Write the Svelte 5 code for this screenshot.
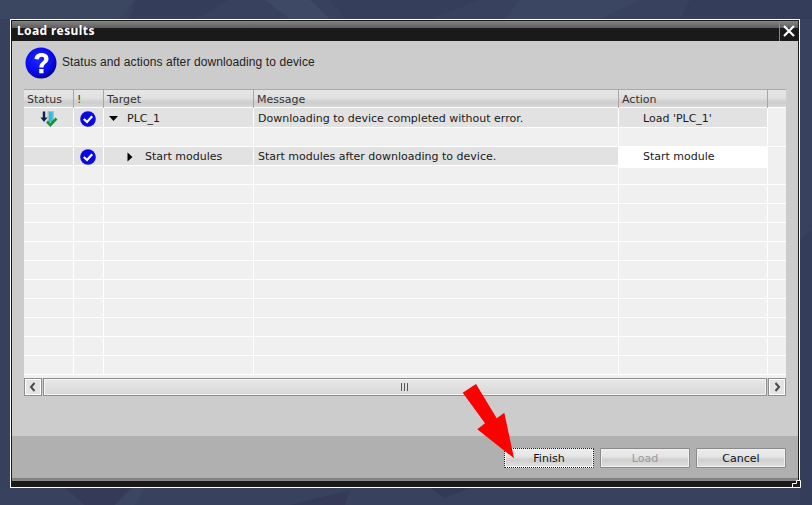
<script>
  const rows = [
    { status: true, check: true, level: 0, open: true, target: 'PLC_1', message: 'Downloading to device completed without error.', action: "Load 'PLC_1'", shaded: true },
    {},
    { check: true, level: 1, target: 'Start modules', message: 'Start modules after downloading to device.', action: 'Start module', shaded: true, white: true },
    {}, {}, {}, {}, {}, {}, {}, {}, {}, {}, {}
  ];
</script>

<div class="page">
  <svg class="wall" width="812" height="505" aria-hidden="true">
    <polygon points="0,0 135,0 120,19 0,19" fill="#3b4661" />
    <polygon points="135,0 228,0 205,15 190,19 130,19" fill="#343e5a" />
    <polygon points="265,0 310,0 330,19 290,19" fill="#3e4966" />
    <polygon points="330,0 480,0 430,19 345,19" fill="#353f5b" />
    <polygon points="520,0 640,0 600,19 505,19" fill="#3b4662" />
    <polygon points="690,0 812,0 812,19 680,19" fill="#343d5a" />
    <polygon points="0,19 10,19 10,488 0,488" fill="#37415d" />
    <polygon points="65,488 130,488 115,505 85,505" fill="#343a58" />
    <polygon points="115,505 133,488 145,488 135,505" fill="#3b4662" />
    <polygon points="390,488 470,488 445,498 430,488" fill="#333a58" />
    <polygon points="290,505 350,490 345,505" fill="#343a58" />
    <polygon points="800,240 812,230 812,505 800,505" fill="#343d5a" />
  </svg>

  <section class="dialog">
    <header class="title">
      <span>Load results</span>
      <button class="close" aria-label="Close">
        <svg width="14" height="14" viewBox="0 0 14 14"><path d="M2 2 12 12M12 2 2 12" stroke="#fff" stroke-width="2.2" /></svg>
      </button>
    </header>

    <div class="body">
      <div class="prompt">
        <svg class="help" width="32" height="32" viewBox="0 0 32 32">
          <defs>
            <radialGradient id="hb" cx=".42" cy=".38" r=".65">
              <stop offset="0" stop-color="#1c28ff" /><stop offset=".72" stop-color="#0808ea" /><stop offset="1" stop-color="#04047a" />
            </radialGradient>
          </defs>
          <circle cx="16" cy="16" r="15.500" fill="url(#hb)" />
          <path d="M9.500 12C9.700 8.300 12.500 6 16.500 6c4.200 0 7 2.200 7 5.700 0 4.700-5 4.600-5 8.800h-4.200c0-5.600 4.900-5.700 4.900-8.600 0-1.300-1-2.200-2.500-2.200-1.700 0-2.700 1-2.900 2.700z" fill="#fff" />
          <rect x="14.200" y="22" width="4.300" height="4.300" fill="#fff" />
        </svg>
        <span>Status and actions after downloading to device</span>
      </div>

      <div class="table">
        <div class="row head">
          <div>Status</div><div class="bang">!</div><div>Target</div><div>Message</div><div>Action</div><div></div>
        </div>
        {#each rows as r}
          <div class="row" class:shaded={r.shaded}>
            <div class="c-status">
              {#if r.status}
                <svg width="18" height="18" viewBox="0 0 18 18">
                  <path d="M2.800 1.500h2.400V7.500H7.500L4 12 .5 7.500H2.800z" fill="#0b2150" />
                  <rect x="7.500" y="1" width="6.500" height="11" fill="#a6bccb" />
                  <rect x="9" y="2" width="3.500" height="10" fill="#1fc4de" />
                  <path d="M7 11.500 10.300 15 16.500 8.500" fill="none" stroke="#17913a" stroke-width="2.600" />
                </svg>
              {/if}
            </div>
            <div class="c-check">
              {#if r.check}
                <svg width="16" height="16" viewBox="0 0 16 16">
                  <circle cx="8" cy="8" r="7.800" fill="#0a0ae0" />
                  <path d="M3.800 8 7 11 12.200 5.300" fill="none" stroke="#fff" stroke-width="2.200" />
                </svg>
              {/if}
            </div>
            <div class="c-target" class:indent={r.level === 1}>
              {#if r.target}
                <svg class="tw" width="9" height="10" viewBox="0 0 9 10">
                  {#if r.open}<path d="M0 2h9L4.500 7z" fill="#000" />{:else}<path d="M1.500 .5v9L6.500 5z" fill="#000" />{/if}
                </svg>
                <span>{r.target}</span>
              {/if}
            </div>
            <div class="c-msg">{r.message ?? ''}</div>
            <div class="c-action" class:white={r.white}>{r.action ?? ''}</div>
            <div class="c-end"></div>
          </div>
        {/each}
      </div>

      <div class="scroll">
        <button class="sbtn" aria-label="Left">
          <svg width="8" height="10" viewBox="0 0 8 10"><path d="M5.500 1 2 5l3.500 4" fill="none" stroke="#4a4a4a" stroke-width="2" /></svg>
        </button>
        <div class="track"><span class="grip"></span></div>
        <button class="sbtn" aria-label="Right">
          <svg width="8" height="10" viewBox="0 0 8 10"><path d="M2.500 1 6 5 2.500 9" fill="none" stroke="#4a4a4a" stroke-width="2" /></svg>
        </button>
      </div>
    </div>

    <footer class="foot">
      <button class="btn focus">Finish</button>
      <button class="btn off">Load</button>
      <button class="btn">Cancel</button>
    </footer>
    <div class="base"></div>
  </section>

  <svg class="overlay" width="812" height="505" aria-hidden="true">
    <polygon points="796.500,480.500 800.500,480.500 800.500,487.500 792.500,487.500 792.500,483.500 796.500,483.500" fill="#1a1a1a" stroke="#fff" />
    <polygon points="462.700,392.700 476,384 496.700,418.300 504.300,412.700 514,458.300 477.300,429.300 485,423.300" fill="#ff0000" />
  </svg>
</div>

<style>
  :global(body) { margin: 0; background: #38425f; }
  .page {
    position: relative;
    width: 812px;
    height: 505px;
    overflow: hidden;
    padding: 19px 0 0 10px;
    box-sizing: border-box;
    font-family: "DejaVu Sans", sans-serif;
    font-size: 11px;
    color: #1a1a1a;
  }
  .wall, .overlay { position: absolute; left: 0; top: 0; }
  .overlay { pointer-events: none; }
  .dialog {
    position: relative;
    width: 790px;
    height: 469px;
    box-sizing: border-box;
    border: 1px solid #fff;
    padding: 1px;
    background: #1a1a1a;
    display: flex;
    flex-direction: column;
  }
  .title {
    height: 20px;
    flex: none;
    display: flex;
    justify-content: space-between;
    background: linear-gradient(#858585 0, #5c5c5c 7px, #1a1a1a 7px, #1a1a1a 100%);
    color: #fff;
    font-family: "Noto Sans", sans-serif;
    font-weight: bold;
    font-size: 12px;
    letter-spacing: .4px;
  }
  .title > span { padding: 2px 0 0 5px; line-height: 16px; }
  .close {
    width: 19px;
    padding: 0;
    border: 0;
    border-left: 1px solid #8a8a8a;
    background: transparent;
    display: flex;
    align-items: center;
    justify-content: center;
  }
  .body {
    flex: 1;
    background: #cccccc;
    padding: 0 12px;
    display: flex;
    flex-direction: column;
    min-height: 0;
  }
  .prompt {
    height: 48px;
    flex: none;
    display: flex;
    align-items: flex-start;
    gap: 5px;
    font-family: "Liberation Sans", sans-serif;
    font-size: 12px;
    letter-spacing: .1px;
    color: #222;
    padding: 6px 0 0 1px;
    box-sizing: border-box;
  }
  .help { flex: none; }
  .prompt span { line-height: 30px; }
  .table { background: #f0f0f0; flex: none; height: 289px; overflow: hidden; }
  .row {
    display: grid;
    grid-template-columns: 50px 30px 150px 365px 149px 18px;
    height: 19px;
    box-sizing: border-box;
    border-bottom: 1px solid #fff;
    line-height: 20px;
    background: #f0f0f0;
  }
  .row:nth-child(2) { height: 20px; line-height: 22px; }
  .row > div { border-right: 1px solid #fff; box-sizing: border-box; white-space: nowrap; min-width: 0; }
  .row > div:last-child { border-right: 0; }
  .row.shaded { background: #e2e2e2; }
  .row.shaded .c-end { background: #f0f0f0; }
  .row.head {
    height: 19px;
    background: linear-gradient(#e6e6e6 0, #e0e0e0 8px, #cdcdcd 12px, #d8d8d8 100%);
    border-top: 1px solid #a9a9a9;
    border-bottom: 1px solid #fff;
    line-height: 20px;
    color: #333;
  }
  .row.head > div { border-right: 1px solid #a6a6a6; padding-left: 3px; }
  .row.head > div:last-child { border-right: 0; }
  .c-status, .c-check { display: flex; align-items: center; justify-content: center; padding-bottom: 2px; }
  .c-check { padding-right: 1px; }
  .c-target { display: flex; align-items: center; padding: 0 0 1px 5px; }
  .c-target.indent { padding-left: 22px; }
  .c-target .tw { flex: none; margin-right: 9px; }
  .c-target.indent .tw { margin-right: 10px; }
  .c-msg { padding-left: 4px; }
  .c-action { padding-left: 24px; }
  .c-action.white { background: #fff; }
  .scroll { display: flex; height: 18px; gap: 1px; flex: none; }
  .sbtn {
    width: 18px;
    padding: 0;
    border: 1px solid #8f8f8f;
    box-shadow: inset 0 0 0 1px #fff;
    background: #e4e4e4;
    display: flex;
    align-items: center;
    justify-content: center;
  }
  .track {
    flex: 1;
    border: 1px solid #8f8f8f;
    box-shadow: inset 0 0 0 1px #f4f4f4;
    background: linear-gradient(#e8e8e8, #d8d8d8);
    display: flex;
    align-items: center;
    justify-content: center;
  }
  .grip {
    width: 7px;
    height: 8px;
    margin-left: -2px;
    background: repeating-linear-gradient(90deg, #555 0 1px, transparent 1px 3px);
  }
  .foot {
    height: 42px;
    flex: none;
    background: #b0b0b0;
    display: flex;
    justify-content: flex-end;
    gap: 6px;
    padding: 12px 12px 0 0;
    box-sizing: border-box;
  }
  .btn {
    width: 90px;
    height: 20px;
    padding: 0;
    border: 1px solid #8a8a8a;
    border-radius: 1px;
    box-shadow: inset 0 0 0 1px #f0f0f0;
    background: linear-gradient(#ececec 0, #e6e6e6 40%, #cfcfcf 60%, #e0e0e0 100%);
    font: 11px "DejaVu Sans", sans-serif;
    color: #111;
  }
  .btn.focus { border: 1px dotted #222; }
  .btn.off { color: #9a9a9a; }
  .base {
    height: 8px;
    flex: none;
    background: linear-gradient(#7c7c7c 0, #8c8c8c 3px, #1a1a1a 3px);
  }
</style>
